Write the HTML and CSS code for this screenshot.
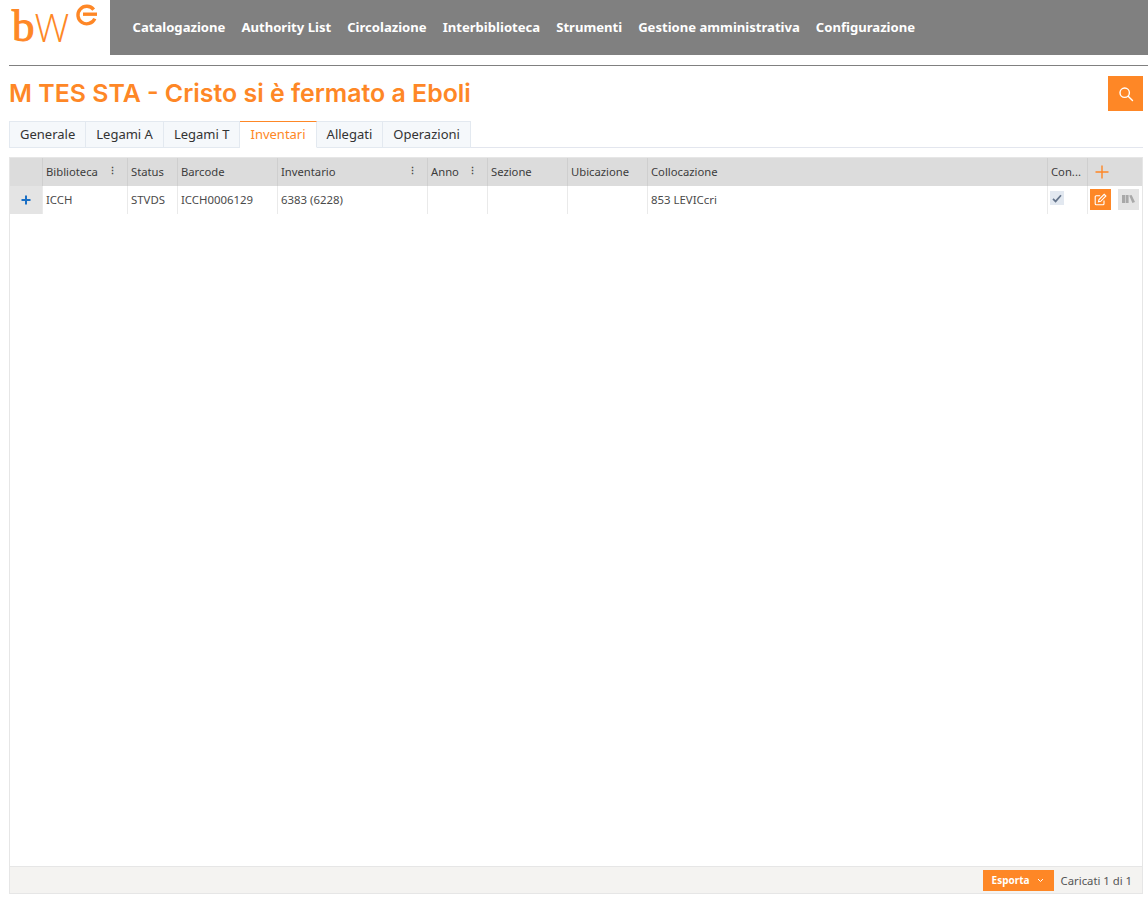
FILE: index.html
```html
<!DOCTYPE html>
<html lang="it">
<head>
<meta charset="utf-8">
<title>bWG</title>
<link rel="stylesheet" href="styles.css">
</head>
<body>
<header class="topbar">
  <div class="logo">
    <span class="logo-b">b</span><span class="logo-w">W</span>
    <svg class="logo-g" width="23" height="23" viewBox="0 0 23 23"><path d="M18.7 5.6A8.8 8.8 0 1 0 19.8 14.6" fill="none" stroke="#fe8726" stroke-width="3.4"/><path d="M8 8.5h14v3.4H8z" fill="#fe8726"/></svg>
  </div>
  <nav class="nav">
    <a>Catalogazione</a><a>Authority List</a><a>Circolazione</a><a>Interbiblioteca</a><a>Strumenti</a><a>Gestione amministrativa</a><a>Configurazione</a>
  </nav>
</header>
<main class="content">
  <div class="rule"></div>
  <div class="title-row">
    <h1 class="title">M TES STA - Cristo si è fermato a Eboli</h1>
    <button class="search-btn" aria-label="Cerca">
      <svg width="16" height="16" viewBox="0 0 16 16" fill="none" stroke="#fff" stroke-width="1.4"><circle cx="6.7" cy="6.7" r="4.7"/><path d="M10.2 10.2l4.3 4.3" stroke-linecap="round"/></svg>
    </button>
  </div>
  <div class="tabs">
    <div class="tab">Generale</div>
    <div class="tab">Legami A</div>
    <div class="tab">Legami T</div>
    <div class="tab active">Inventari</div>
    <div class="tab">Allegati</div>
    <div class="tab">Operazioni</div>
  </div>
  <section class="grid">
    <div class="row head">
      <div class="cell"></div>
      <div class="cell">Biblioteca<span class="dots">⋮</span></div>
      <div class="cell">Status</div>
      <div class="cell">Barcode</div>
      <div class="cell">Inventario<span class="dots">⋮</span></div>
      <div class="cell">Anno<span class="dots">⋮</span></div>
      <div class="cell">Sezione</div>
      <div class="cell">Ubicazione</div>
      <div class="cell">Collocazione</div>
      <div class="cell">Con...</div>
      <div class="cell add">
        <svg width="14" height="14" viewBox="0 0 14 14"><path d="M7 0.5v13M0.5 7h13" stroke="#fe8726" stroke-width="1.4" fill="none"/></svg>
      </div>
    </div>
    <div class="row data">
      <div class="cell expander">
        <svg width="10" height="10" viewBox="0 0 10 10"><path d="M5 0.5v9M0.5 5h9" stroke="#1a6fc4" stroke-width="2" fill="none"/></svg>
      </div>
      <div class="cell">ICCH</div>
      <div class="cell">STVDS</div>
      <div class="cell">ICCH0006129</div>
      <div class="cell">6383 (6228)</div>
      <div class="cell"></div>
      <div class="cell"></div>
      <div class="cell"></div>
      <div class="cell">853 LEVICcri</div>
      <div class="cell">
        <span class="check"><svg width="10" height="9" viewBox="0 0 10 9"><path d="M1 4.8l2.6 2.6L9 1.2" fill="none" stroke="#64748b" stroke-width="1.7"/></svg></span>
      </div>
      <div class="cell actions">
        <span class="act edit"><svg width="13" height="13" viewBox="0 0 13 13" fill="none" stroke="#fff" stroke-width="1.1"><path d="M10 7.5v3.2a1 1 0 0 1-1 1H2.2a1 1 0 0 1-1-1V3.8a1 1 0 0 1 1-1h4"/><path d="M5 6.6l-.5 2.2 2.2-.5 5.2-5.4-1.7-1.6z"/></svg></span>
        <span class="act books"><svg width="13" height="8" viewBox="0 0 13 8" fill="#a8a8a8"><path d="M0 0h3v8H0zM3.6 0h3v8h-3zM7.2 0.4l2.4-.4L13 7l-2.6 1z"/></svg></span>
      </div>
    </div>
    <div class="spacer"></div>
    <footer class="grid-foot">
      <button class="export">Esporta<svg width="7" height="5" viewBox="0 0 7 5"><path d="M1 1l2.5 2.5L6 1" fill="none" stroke="#fff" stroke-width="1"/></svg></button>
      <span class="count">Caricati 1 di 1</span>
    </footer>
  </section>
</main>
</body>
</html>
```
FILE: styles.css
```css
* { box-sizing: border-box; }
html, body { margin: 0; height: 100%; }
body { background: #fff; font-family: "Noto Sans", "Open Sans", sans-serif; color: #333; height: 902px; overflow: hidden; }

.topbar { display: flex; height: 55px; }
.logo { width: 110px; flex: none; display: flex; align-items: flex-start; position: relative; padding-left: 12px; color: #fe8726; }
.logo-b { font-family: "Liberation Serif", serif; font-size: 45px; line-height: 50px; margin-top: 1px; -webkit-text-stroke: 1px #fe8726; }
.logo-w { font-family: "Open Sans", sans-serif; font-size: 39px; font-weight: 300; line-height: 50px; margin-top: 2px; margin-left: 0; }
.logo-g { position: absolute; left: 75px; top: 4px; }
.nav { flex: 1; background: #808080; display: flex; align-items: center; gap: 16px; padding: 0 0 1px 22.5px; }
.nav a { color: #fff; font-size: 13.1px; font-weight: 700; }

.content { padding: 10px 5px 0 9px; display: flex; flex-direction: column; height: 847px; }
.rule { height: 1px; background: #808080; margin-right: -5px; }
.title-row { display: flex; justify-content: space-between; align-items: flex-start; margin-top: 10px; height: 35px; }
.title { margin: 0; font-family: Inter, sans-serif; font-weight: 600; font-size: 24.9px; line-height: 35px; color: #fe8726; }
.search-btn { width: 35px; height: 35px; border: 0; padding: 0; background: #fe8726; display: flex; align-items: center; justify-content: center; }

.tabs { display: flex; margin-top: 10px; height: 27px; border-bottom: 1px solid #e3e6ee; }
.tab { height: 27px; padding: 0 10px; font-size: 13px; line-height: 25px; color: #333; background: #f5f8fb; border: 1px solid #e3e9f0; border-left-width: 0; }
.tab:first-child { border-left-width: 1px; }
.tab.active { background: #fff; color: #fe8726; border-top: 1px solid #fe8726; border-bottom-color: #fff; }

.grid { margin-top: 9px; flex: 1; display: flex; flex-direction: column; border: 1px solid #e6e6e6; margin-bottom: 8px; }
.row { display: grid; grid-template-columns: 33px 85px 50px 100px 150px 60px 80px 80px 400px 40px 1fr; }
.head { height: 28px; background: #dcdcdc; font-size: 11.25px; color: #3c3c3c; }
.head .cell { line-height: 28px; border-right: 1px solid #cfcfcf; }
.head .cell:last-child { border-right: 0; }
.data { height: 28px; font-size: 11.4px; color: #4a4a4a; }
.data .cell { line-height: 28px; border-right: 1px solid #eaeaea; }
.data .cell:last-child { border-right: 0; }
.cell { padding: 0 3px; position: relative; white-space: nowrap; overflow: hidden; display: block; }
.dots { position: absolute; right: 10px; top: -1px; font-size: 9px; font-weight: 700; color: #444; }
.add { display: flex; align-items: center; padding-left: 7px; }
.expander { background: #e4e4e4; display: flex; align-items: center; justify-content: center; padding: 0; }
.check { width: 14px; height: 14px; background: #e2e8f0; display: inline-flex; align-items: center; justify-content: center; vertical-align: middle; margin-top: -5px; margin-left: -1px; }
.actions { display: flex; align-items: center; gap: 7px; padding: 0 0 2px 2px; }
.act { width: 21px; height: 21px; display: flex; align-items: center; justify-content: center; }
.edit { background: #fe8726; }
.books { background: #e4e4e4; }

.spacer { flex: 1; }
.grid-foot { height: 27px; background: #f4f3f1; border-top: 1px solid #e6e6e6; display: flex; align-items: center; justify-content: flex-end; gap: 7px; padding: 0 10px 0 0; }
.export { width: 71px; height: 21px; border: 0; background: #fe8726; color: #fff; font: 700 10px "Noto Sans", sans-serif; display: flex; align-items: center; justify-content: space-between; padding: 0 10px 0 9px; }
.count { font-size: 11.3px; color: #555; }
```
